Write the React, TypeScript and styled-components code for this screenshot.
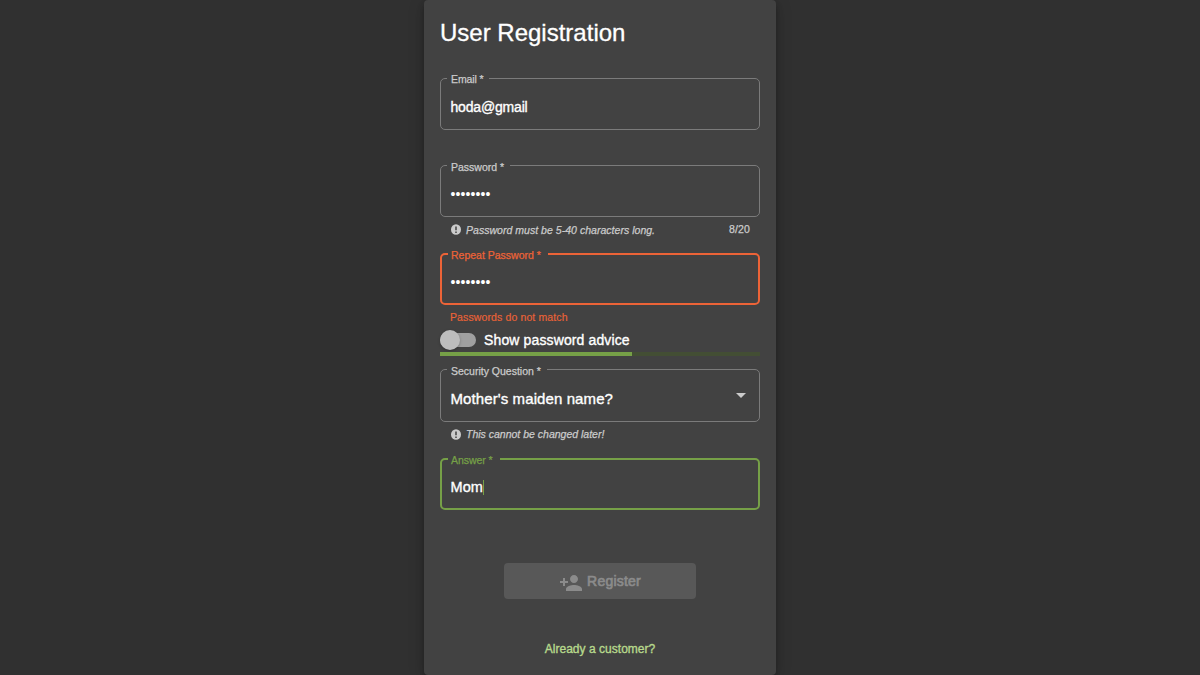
import React from 'react';
import styled, { createGlobalStyle } from 'styled-components';

const GlobalStyle = createGlobalStyle`
  * { box-sizing: border-box; }
  html, body { margin: 0; height: 100%; overflow: hidden; background: #303030; }
  body { font-family: "Liberation Sans", Arial, sans-serif; color: #fff; }
`;

const Page = styled.main`
  display: flex;
  justify-content: center;
  height: 675px;
  overflow: hidden;
`;

const Card = styled.form`
  display: flex;
  flex-direction: column;
  width: 352px;
  height: 675px;
  padding: 0 16px;
  border-radius: 4px;
  background: #424242;
  box-shadow: 0 3px 5px -1px rgba(0, 0, 0, 0.2), 0 6px 10px rgba(0, 0, 0, 0.14), 0 1px 18px rgba(0, 0, 0, 0.12);
`;

const Title = styled.h1`
  margin: 17px 0 0;
  height: 61px;
  font-size: 24px;
  font-weight: 400;
  line-height: 32px;
  -webkit-text-stroke: 0.3px #fff;
`;

type Tone = 'idle' | 'error' | 'focus';
const lineColor = { idle: '#7b7b7b', error: '#ec6337', focus: '#76a047' };
const labelColor = { idle: '#cbcbcb', error: '#ec6337', focus: '#76a047' };

const FieldBlock = styled.div<{ $height: number }>`
  flex: none;
  height: ${(p) => p.$height}px;
`;

const Outline = styled.fieldset<{ $tone: Tone; $height?: number }>`
  display: block;
  min-width: 0;
  height: ${(p) => p.$height ?? 52}px;
  margin: 0;
  padding: 0;
  border: ${(p) => (p.$tone === 'idle' ? 1 : 2)}px solid ${(p) => lineColor[p.$tone]};
  border-radius: 5px;
`;

const Label = styled.legend<{ $tone: Tone; $spacing?: number; $drop?: number }>`
  display: flex;
  align-items: center;
  height: ${(p) => (p.$tone === 'idle' ? 1 : 2)}px;
  margin-left: 6px;
  padding: ${(p) => (p.$tone === 'idle' ? '0 6px 0 4px' : '0 7px 0 3px')};
  font-size: 10.5px;
  white-space: nowrap;
  letter-spacing: ${(p) => p.$spacing ?? 0}px;
  color: ${(p) => labelColor[p.$tone]};

  span {
    flex: none;
    line-height: 12px;
    padding-top: ${(p) => p.$drop ?? 1}px;
    -webkit-text-stroke: 0.25px currentColor;
  }
`;

const Value = styled.div<{ $spacing?: number; $size?: number }>`
  display: flex;
  align-items: center;
  height: 100%;
  padding: 6px 13px 0 9.5px;
  font-size: ${(p) => p.$size ?? 14}px;
  line-height: 18px;
  letter-spacing: ${(p) => p.$spacing ?? 0}px;
  -webkit-text-stroke: 0.35px #fff;
`;

const Focused = styled(Value)`
  padding-left: 8.5px;
`;

const Mask = styled.div<{ $inset: number }>`
  display: flex;
  align-items: center;
  height: 100%;
  padding: 6px 0 0 ${(p) => p.$inset}px;
  font-size: 14px;
  line-height: 18px;
  letter-spacing: 0.1px;
`;

const Caret = styled.i`
  width: 1px;
  height: 15px;
  background: #76a047;
`;

const Arrow = styled.i`
  margin: -7px 0 0 auto;
  border: 5px solid transparent;
  border-top-color: #cbcbcb;
  border-bottom: 0;
`;

const Hint = styled.div`
  display: flex;
  align-items: center;
  height: 14px;
  margin-top: 5px;
  padding: 0 10px 0 11px;
  font-size: 10.5px;
  line-height: 14px;
  color: #cbcbcb;

  svg { flex: none; margin-right: 5px; }
`;

const HintText = styled.em<{ $spacing?: number; $drop?: number }>`
  padding-top: ${(p) => p.$drop ?? 0}px;
  letter-spacing: ${(p) => p.$spacing ?? 0}px;
  white-space: nowrap;
  -webkit-text-stroke: 0.25px currentColor;
`;

const Counter = styled.span`
  margin-left: auto;
  letter-spacing: 0.15px;
  -webkit-text-stroke: 0.25px currentColor;
`;

const ErrorText = styled.div`
  margin: 5px 0 0 10px;
  font-size: 10.5px;
  line-height: 14px;
  letter-spacing: 0.12px;
  color: #ec6337;
  -webkit-text-stroke: 0.15px currentColor;
`;

const ToggleRow = styled.div`
  display: flex;
  align-items: center;
  flex: none;
  height: 24px;
  font-size: 14px;
  letter-spacing: 0.13px;
  -webkit-text-stroke: 0.35px #fff;
`;

const Track = styled.span`
  display: flex;
  align-items: center;
  width: 36px;
  height: 14px;
  margin-right: 8px;
  border-radius: 7px;
  background: #a0a0a0;
`;

const Thumb = styled.span`
  width: 20px;
  height: 20px;
  flex: none;
  border-radius: 50%;
  background: #bdbdbd;
  box-shadow: 0 1px 3px rgba(0, 0, 0, 0.25);
`;

const Strength = styled.div`
  flex: none;
  height: 4px;
  margin-bottom: 13px;
  background: #434e34;
`;

const StrengthFill = styled.div`
  width: 60%;
  height: 100%;
  background: #76a047;
`;

const RegisterButton = styled.button`
  display: flex;
  align-items: center;
  justify-content: center;
  flex: none;
  align-self: center;
  width: 192px;
  height: 36px;
  margin-top: 16px;
  padding: 0;
  border: 0;
  border-radius: 4px;
  background: #585858;
  color: #8b8b8b;
  font: 400 14px "Liberation Sans", Arial, sans-serif;

  svg { margin: 3px 4px 0 0; }
  span {
    letter-spacing: 0.22px;
    -webkit-text-stroke: 0.7px currentColor;
  }
`;

const LoginLink = styled.a`
  align-self: center;
  margin-top: 42px;
  font-size: 12px;
  line-height: 16px;
  letter-spacing: 0.03px;
  color: #b7d98c;
  -webkit-text-stroke: 0.35px currentColor;
`;

const HintIcon = () => (
  <svg width="10" height="11" viewBox="0 0 10 11" fill="none">
    <ellipse cx="5" cy="5.5" rx="5" ry="5.3" fill="#cbcbcb" />
    <path d="M5 2.5v3.7M5 7.5v1.4" stroke="#424242" strokeWidth="1.5" />
  </svg>
);

const PersonAddIcon = () => (
  <svg width="24" height="24" viewBox="0 0 24 24" fill="#8b8b8b">
    <path d="M15 12c2.21 0 4-1.79 4-4s-1.79-4-4-4-4 1.79-4 4 1.79 4 4 4zm-9-2V7H4v3H1v2h3v3h2v-3h3v-2H6zm9 4c-2.67 0-8 1.34-8 4v2h16v-2c0-2.66-5.33-4-8-4z" />
  </svg>
);

export default function App() {
  return (
    <>
      <GlobalStyle />
      <Page>
        <Card>
          <Title>User Registration</Title>

          <FieldBlock $height={87}>
            <Outline $tone="idle">
              <Label $tone="idle" $spacing={-0.12}><span>Email *</span></Label>
              <Value $spacing={-0.18}>hoda@gmail</Value>
            </Outline>
          </FieldBlock>

          <FieldBlock $height={88}>
            <Outline $tone="idle">
              <Label $tone="idle" $drop={3}><span>Password *</span></Label>
              <Mask $inset={9.5}>••••••••</Mask>
            </Outline>
            <Hint>
              <HintIcon />
              <HintText $spacing={0.03} $drop={1}>Password must be 5-40 characters long.</HintText>
              <Counter>8/20</Counter>
            </Hint>
          </FieldBlock>

          <FieldBlock $height={75}>
            <Outline $tone="error">
              <Label $tone="error"><span>Repeat Password *</span></Label>
              <Mask $inset={8.5}>••••••••</Mask>
            </Outline>
            <ErrorText>Passwords do not match</ErrorText>
          </FieldBlock>

          <ToggleRow>
            <Track><Thumb /></Track>
            Show password advice
          </ToggleRow>
          <Strength><StrengthFill /></Strength>

          <FieldBlock $height={89}>
            <Outline $tone="idle" $height={53}>
              <Label $tone="idle" $drop={3}><span>Security Question *</span></Label>
              <Value $size={15} $spacing={0.1}>Mother's maiden name?<Arrow /></Value>
            </Outline>
            <Hint>
              <HintIcon />
              <HintText>This cannot be changed later!</HintText>
            </Hint>
          </FieldBlock>

          <FieldBlock $height={89}>
            <Outline $tone="focus">
              <Label $tone="focus" $spacing={-0.05}><span>Answer *</span></Label>
              <Focused $size={14.5} $spacing={0.1}>Mom<Caret /></Focused>
            </Outline>
          </FieldBlock>

          <RegisterButton type="button" disabled>
            <PersonAddIcon />
            <span>Register</span>
          </RegisterButton>
          <LoginLink>Already a customer?</LoginLink>
        </Card>
      </Page>
    </>
  );
}
